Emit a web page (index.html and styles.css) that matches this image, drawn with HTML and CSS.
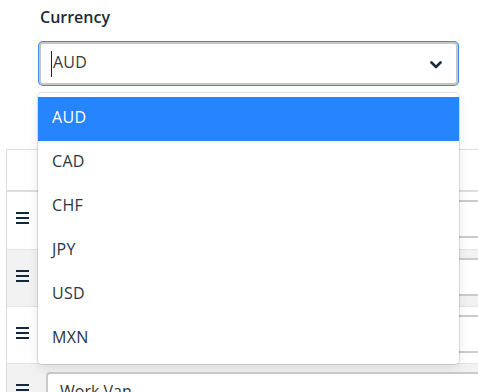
FILE: index.html
```html
<!DOCTYPE html>
<html>
<head>
<meta charset="utf-8">
<link rel="stylesheet" href="styles.css">
</head>
<body>
<div class="page">
  <div class="field">
    <label class="label">Currency</label>
    <div class="control">
      <span class="value"><span class="caret"></span>AUD</span>
      <svg class="chevron" width="12" height="8" viewBox="0 0 12 8"><path d="M1.5 1.5 L6 6 L10.5 1.5" fill="none" stroke="#1b2d40" stroke-width="2.6" stroke-linecap="round" stroke-linejoin="round"/></svg>
    </div>
    <ul class="menu">
      <li class="option selected">AUD</li>
      <li class="option">CAD</li>
      <li class="option">CHF</li>
      <li class="option">JPY</li>
      <li class="option">USD</li>
      <li class="option">MXN</li>
    </ul>
  </div>

  <div class="table">
    <div class="thead"></div>
    <div class="row">
      <div class="handle"><span></span><span></span><span></span></div>
      <div class="cell"><div class="input"></div></div>
    </div>
    <div class="row alt">
      <div class="handle"><span></span><span></span><span></span></div>
      <div class="cell"><div class="input"></div></div>
    </div>
    <div class="row">
      <div class="handle"><span></span><span></span><span></span></div>
      <div class="cell"><div class="input"></div></div>
    </div>
    <div class="row alt">
      <div class="handle"><span></span><span></span><span></span></div>
      <div class="cell"><div class="input">Work Van</div></div>
    </div>
  </div>
</div>
</body>
</html>
```

FILE: styles.css
```css
html, body {
  margin: 0;
  padding: 0;
  overflow: hidden;
  background: #ffffff;
}
body {
  font-family: "Open Sans", "Noto Sans", sans-serif;
  color: #333;
  width: 478px;
  height: 392px;
}
.page {
  padding-top: 6px;
}
.field {
  position: relative;
  margin-left: 39px;
  width: 419px;
}
.label {
  display: block;
  margin-left: 1px;
  font-size: 16px;
  line-height: 22px;
  font-weight: 600;
  color: #1c2a39;
}
.control {
  margin-top: 14px;
  height: 43px;
  box-sizing: border-box;
  border: 2px solid #c6c6c6;
  border-radius: 4px;
  box-shadow: 0 0 0 1px #3b8bef;
  display: flex;
  align-items: center;
  justify-content: space-between;
  padding: 0 14px 0 10px;
  background: #fff;
}
.value {
  display: flex;
  align-items: center;
  font-size: 16px;
  line-height: 22px;
  color: #3a3a3a;
  letter-spacing: 0.2px;
  margin-top: -3px;
}
.caret {
  display: inline-block;
  width: 1px;
  height: 26px;
  background: #222;
  margin-right: 1px;
  margin-top: 3px;
}
.chevron {
  display: block;
  margin-top: 2px;
}
.menu {
  position: absolute;
  left: -1px;
  top: 100%;
  margin: 0;
  margin-top: 8px;
  width: 421px;
  box-sizing: border-box;
  list-style: none;
  padding: 4px 0 3px;
  background: #fff;
  border-radius: 4px;
  box-shadow: 0 0 0 1px rgba(0,0,0,0.1), 0 4px 11px rgba(0,0,0,0.1);
  z-index: 5;
}
.option {
  height: 44px;
  box-sizing: border-box;
  line-height: 40px;
  padding: 0 0 4px 14px;
  font-size: 16px;
  color: #2b3643;
  letter-spacing: 0.3px;
}
.option.selected {
  background: #2684ff;
  color: #fff;
}
.table {
  margin-top: 64px;
  margin-left: 6px;
  width: 472px;
  border-top: 1px solid #dcdcdc;
  border-left: 1px solid #dcdcdc;
}
.thead {
  height: 40px;
  border-bottom: 2px solid #dedede;
}
.row {
  display: flex;
  height: 56px;
  border-top: 1px solid #e4e4e4;
  background: #fff;
}
.thead + .row {
  border-top: none;
  height: 57px;
}
.row.alt {
  background: #f2f2f2;
}
.handle {
  width: 31px;
  box-sizing: border-box;
  padding: 20px 0 0 9px;
  display: flex;
  flex-direction: column;
  gap: 3px;
}
.handle span {
  display: block;
  width: 13px;
  height: 2px;
  background: #14283d;
}
.cell {
  flex: 1;
  padding: 8px 0 10px 8px;
}
.input {
  height: 38px;
  box-sizing: border-box;
  border: 2px solid #cbcbcb;
  border-right: none;
  border-radius: 4px 0 0 4px;
  background: #fff;
  padding: 0 12px;
  font-size: 16px;
  line-height: 34px;
  color: #333;
}
```
